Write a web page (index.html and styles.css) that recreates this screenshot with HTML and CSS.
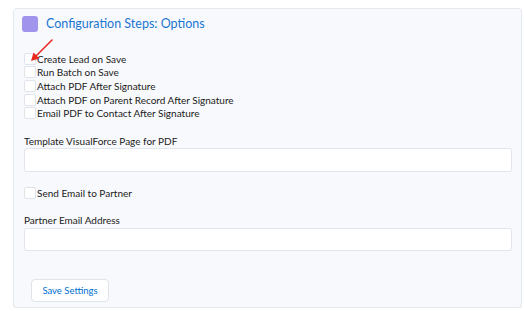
FILE: index.html
```html
<!DOCTYPE html>
<html lang="en">
<head>
    <meta charset="UTF-8">
    <title>Configuration Steps: Options</title>
    <link rel="stylesheet" href="styles.css">
</head>
<body>

    <div class="card">
        <div class="card-header">
            <span class="card-icon"></span>
            <h2 class="card-title">Configuration Steps: Options</h2>
        </div>

        <div class="options">
            <label class="option"><input type="checkbox"><span>Create Lead on Save</span></label>
            <label class="option"><input type="checkbox"><span>Run Batch on Save</span></label>
            <label class="option"><input type="checkbox"><span>Attach PDF After Signature</span></label>
            <label class="option"><input type="checkbox"><span>Attach PDF on Parent Record After Signature</span></label>
            <label class="option"><input type="checkbox"><span>Email PDF to Contact After Signature</span></label>
        </div>

        <label class="field-label" for="templatePage">Template VisualForce Page for PDF</label>
        <input class="text-input" id="templatePage" type="text">

        <div class="options options-single">
            <label class="option"><input type="checkbox"><span>Send Email to Partner</span></label>
        </div>

        <label class="field-label field-label-tight" for="partnerEmail">Partner Email Address</label>
        <input class="text-input text-input-short" id="partnerEmail" type="text">

        <button class="save-button">Save Settings</button>

        <!-- red arrow pointing at the first checkbox -->
        <svg class="arrow" width="30" height="26" viewBox="0 0 30 26">
            <line x1="25" y1="2" x2="8" y2="19" stroke="#e8281f" stroke-width="1.6" stroke-linecap="round"/>
            <polygon points="4,23 6.5,14.5 12.5,20.5" fill="#e8281f"/>
        </svg>
    </div>

</body>
</html>
```

FILE: styles.css
```css
body {
    margin: 0;
    background-color: #ffffff;
    font-family: Lato, "Open Sans", Arial, sans-serif;
    color: #1a1a1a;
}

.card {
    position: relative;
    box-sizing: border-box;
    width: 509px;
    height: 300px;
    margin: 8px 0 0 13px;
    padding: 7px 10px 0 10px;
    background-color: #f8f9fc;
    border: 1px solid #e4e8ef;
    border-radius: 4px;
    box-shadow: 0 1px 1px rgba(0, 0, 0, 0.06);
}

.card-header {
    display: flex;
    align-items: center;
    gap: 8px;
    height: 16px;
    margin-left: -2px;
}

.card-icon {
    width: 16px;
    height: 16px;
    border-radius: 3px;
    background-color: #a094ed;
}

.card-title {
    margin: 0;
    font-size: 12.5px;
    font-weight: 400;
    color: #1a76d2;
    line-height: 16px;
}

.options {
    display: flex;
    flex-direction: column;
    margin-top: 20px;
}

.options-single {
    margin-top: 14px;
}

.option {
    display: flex;
    align-items: center;
    height: 13.6px;
    font-size: 10px;
}

.option input {
    appearance: none;
    box-sizing: border-box;
    width: 12px;
    height: 12px;
    margin: 0 1px 0 0;
    background-color: #ffffff;
    border: 1px solid #e0e4ea;
    border-radius: 2px;
}

.field-label {
    display: block;
    margin-top: 14px;
    height: 14px;
    line-height: 14px;
    font-size: 10px;
}

.field-label-tight {
    margin-top: 13px;
}

.text-input {
    display: block;
    box-sizing: border-box;
    width: 488px;
    height: 24px;
    margin: 0;
    background-color: #ffffff;
    border: 1px solid #e1e5ec;
    border-radius: 3px;
}

.text-input-short {
    height: 23px;
    margin-top: 1px;
}

.save-button {
    display: block;
    box-sizing: border-box;
    width: 78px;
    height: 23px;
    margin: 28px 0 0 7px;
    padding: 0;
    background-color: #ffffff;
    border: 1px solid #dfe3ea;
    border-radius: 4px;
    font-family: Lato, "Open Sans", Arial, sans-serif;
    font-size: 9.5px;
    color: #0070d2;
}

.arrow {
    position: absolute;
    left: 13px;
    top: 29px;
}
```
